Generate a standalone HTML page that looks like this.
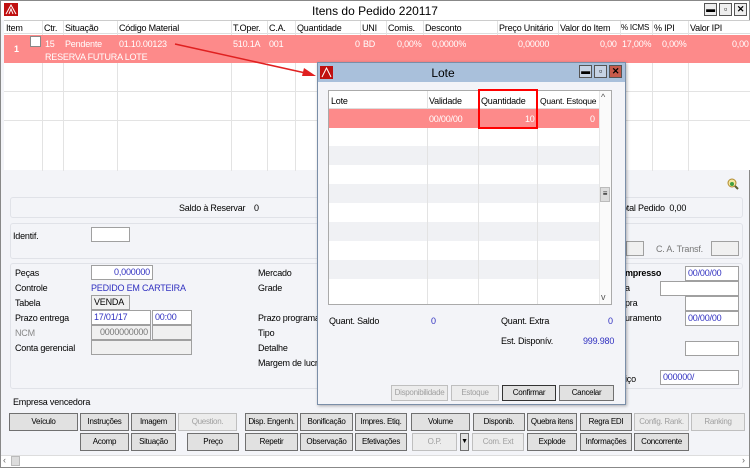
<!DOCTYPE html>
<html><head><meta charset="utf-8"><style>
*{box-sizing:border-box;margin:0;padding:0}
body{width:750px;height:468px;overflow:hidden;background:#f3f4f8;font-family:"Liberation Sans",sans-serif;font-size:9px;letter-spacing:-0.2px;color:#000;position:relative}
.a{position:absolute;white-space:nowrap}
.btn{position:absolute;height:18px;border:1px solid #707070;background:#e1e1e1;text-align:center;line-height:16px;font-size:8px;letter-spacing:-0.3px;white-space:nowrap;overflow:hidden}
.dis{color:#a0a0a0;border-color:#bfbfbf;background:#ececec}
.in{position:absolute;height:15px;background:#fff;border:1px solid #a0a0a0;line-height:13px;padding:0 2px;font-size:9px;white-space:nowrap}
.gr{background:#f0f0f0}
.blue{color:#3030c0}
.grp{position:absolute;border:1px solid #e0e2e8;border-radius:3px}
.vl{position:absolute;width:1px;background:#e3e3e3}
</style></head><body>
<div class="a" style="left:0;top:0;width:750px;height:468px;border:1px solid #888"></div>
<div class="a" style="top:1px;left:1px;width:748px;height:19px;background:#fff"></div>
<svg class="a" style="left:4px;top:3px" width="14" height="13"><rect width="14" height="13" fill="#c01010"/><path d="M2 11 L7 2 L12 11 M5 11 L7 6 L9 11" stroke="#fff" stroke-width="1" fill="none"/></svg>
<div class="a" style="left:0;width:750px;top:4px;text-align:center;font-size:12px;letter-spacing:0">Itens do Pedido 220117</div>
<div class="a" style="left:704px;top:3px;width:13px;height:13px;border:1px solid #555;background:#eee;font-size:9px;text-align:center;line-height:10px;font-weight:bold">▬</div>
<div class="a" style="left:719px;top:3px;width:13px;height:13px;border:1px solid #555;background:#eee;text-align:center;line-height:11px;font-weight:bold">▫</div>
<div class="a" style="left:734px;top:3px;width:13px;height:13px;border:1px solid #555;background:#eee;text-align:center;line-height:11px;font-weight:bold">✕</div>
<div class="a" style="left:4px;top:20px;width:746px;height:150px;background:#fff;border-top:1px solid #ccc"></div>
<div class="a" style="left:4px;top:21px;width:746px;height:13px;background:#fff;border-bottom:1px solid #ddd"></div>
<div class="vl" style="left:42px;top:21px;height:150px"></div><div class="vl" style="left:63px;top:21px;height:150px"></div><div class="vl" style="left:117px;top:21px;height:150px"></div><div class="vl" style="left:231px;top:21px;height:150px"></div><div class="vl" style="left:267px;top:21px;height:150px"></div><div class="vl" style="left:295px;top:21px;height:150px"></div><div class="vl" style="left:360px;top:21px;height:150px"></div><div class="vl" style="left:386px;top:21px;height:150px"></div><div class="vl" style="left:423px;top:21px;height:150px"></div><div class="vl" style="left:497px;top:21px;height:150px"></div><div class="vl" style="left:558px;top:21px;height:150px"></div><div class="vl" style="left:620px;top:21px;height:150px"></div><div class="vl" style="left:652px;top:21px;height:150px"></div><div class="vl" style="left:688px;top:21px;height:150px"></div>
<div class="a" style="left:4px;top:91px;width:746px;height:1px;background:#e3e3e3"></div>
<div class="a" style="left:4px;top:120px;width:746px;height:1px;background:#e3e3e3"></div>
<div class="a" style="left:6px;top:23px">Item</div><div class="a" style="left:44px;top:23px">Ctr.</div><div class="a" style="left:65px;top:23px">Situação</div><div class="a" style="left:119px;top:23px">Código Material</div><div class="a" style="left:233px;top:23px">T.Oper.</div><div class="a" style="left:269px;top:23px">C.A.</div><div class="a" style="left:297px;top:23px">Quantidade</div><div class="a" style="left:362px;top:23px">UNI</div><div class="a" style="left:388px;top:23px">Comis.</div><div class="a" style="left:425px;top:23px">Desconto</div><div class="a" style="left:499px;top:23px">Preço Unitário</div><div class="a" style="left:560px;top:23px">Valor do Item</div><div class="a" style="left:621px;top:23px;font-size:8px">% ICMS</div><div class="a" style="left:654px;top:23px">% IPI</div><div class="a" style="left:690px;top:23px">Valor IPI</div>
<div class="a" style="left:4px;top:35px;width:746px;height:28px;background:#fd8a8a"></div>
<div class="a" style="left:30px;top:36px;width:11px;height:11px;background:#fff;border:1px solid #888"></div>
<div class="a" style="color:#fff;left:14px;top:44px;font-weight:bold">1</div>
<div class="a" style="color:#fff;left:45px;top:39px">15</div><div class="a" style="color:#fff;left:65px;top:39px">Pendente</div><div class="a" style="color:#fff;left:119px;top:39px">01.10.00123</div><div class="a" style="color:#fff;left:233px;top:39px">510.1A</div><div class="a" style="color:#fff;left:269px;top:39px">001</div><div class="a" style="color:#fff;left:355px;top:39px">0</div><div class="a" style="color:#fff;left:363px;top:39px">BD</div><div class="a" style="color:#fff;left:397px;top:39px">0,00%</div><div class="a" style="color:#fff;left:432px;top:39px">0,0000%</div><div class="a" style="color:#fff;left:518px;top:39px">0,00000</div><div class="a" style="color:#fff;left:600px;top:39px">0,00</div><div class="a" style="color:#fff;left:622px;top:39px">17,00%</div><div class="a" style="color:#fff;left:662px;top:39px">0,00%</div><div class="a" style="color:#fff;left:732px;top:39px">0,00</div>
<div class="a" style="color:#fff;left:45px;top:52px">RESERVA FUTURA LOTE</div>
<svg class="a" style="left:170px;top:40px" width="150" height="40"><path d="M5 4 L140 34" stroke="#e02020" stroke-width="1.5"/><path d="M146 36 L134 28 L132 36 Z" fill="#e02020"/></svg>
<svg class="a" style="left:727px;top:178px" width="12" height="12"><circle cx="5" cy="5" r="4" fill="#f4e7a0" stroke="#b08a30"/><path d="M8 8 L11 11" stroke="#606030" stroke-width="2"/><circle cx="5" cy="6" r="2" fill="#40a040"/></svg>
<div class="grp" style="left:10px;top:197px;width:733px;height:21px"></div>
<div class="a" style="left:179px;top:203px">Saldo à Reservar</div><div class="a" style="left:254px;top:203px">0</div>
<div class="a" style="left:622px;top:203px">otal Pedido&nbsp; 0,00</div>
<div class="grp" style="left:10px;top:223px;width:733px;height:36px"></div>
<div class="a" style="left:13px;top:231px">Identif.</div>
<div class="in" style="left:91px;top:227px;width:39px"></div>
<div class="in gr" style="left:626px;top:241px;width:18px"></div>
<div class="a" style="left:656px;top:244px;color:#777">C. A. Transf.</div>
<div class="in gr" style="left:711px;top:241px;width:28px"></div>
<div class="grp" style="left:10px;top:263px;width:733px;height:126px"></div>
<div class="a" style="left:15px;top:268px">Peças</div><div class="in blue" style="left:91px;top:265px;width:62px;text-align:right">0,000000</div>
<div class="a" style="left:15px;top:283px">Controle</div><div class="a blue" style="left:91px;top:283px">PEDIDO EM CARTEIRA</div>
<div class="a" style="left:15px;top:298px">Tabela</div><div class="in gr" style="left:91px;top:295px;width:39px">VENDA</div>
<div class="a" style="left:15px;top:313px">Prazo entrega</div><div class="in blue" style="left:91px;top:310px;width:60px">17/01/17</div><div class="in blue" style="left:152px;top:310px;width:40px">00:00</div>
<div class="a" style="left:15px;top:328px;color:#888">NCM</div><div class="in gr" style="left:91px;top:325px;width:60px;text-align:right;color:#777">0000000000</div><div class="in gr" style="left:152px;top:325px;width:40px"></div>
<div class="a" style="left:15px;top:343px">Conta gerencial</div><div class="in gr" style="left:91px;top:340px;width:101px"></div>
<div class="a" style="left:258px;top:268px">Mercado</div><div class="a" style="left:258px;top:283px">Grade</div><div class="a" style="left:258px;top:313px">Prazo programa</div><div class="a" style="left:258px;top:328px">Tipo</div><div class="a" style="left:258px;top:343px">Detalhe</div><div class="a" style="left:258px;top:358px">Margem de lucro</div>
<div class="a" style="left:625px;top:268px;font-weight:bold">mpresso</div><div class="in blue" style="left:685px;top:266px;width:54px">00/00/00</div>
<div class="a" style="left:625px;top:283px">a</div><div class="in" style="left:660px;top:281px;width:79px"></div>
<div class="a" style="left:625px;top:298px">pra</div><div class="in" style="left:685px;top:296px;width:54px"></div>
<div class="a" style="left:625px;top:313px">uramento</div><div class="in blue" style="left:685px;top:311px;width:54px">00/00/00</div>
<div class="in" style="left:685px;top:341px;width:54px"></div>
<div class="a" style="left:625px;top:374px">iço</div><div class="in blue" style="left:660px;top:370px;width:79px">000000/</div>
<div class="a" style="left:13px;top:397px">Empresa vencedora</div>
<div class="btn" style="left:9px;top:413px;width:69px">Veículo</div><div class="btn" style="left:80px;top:413px;width:49px">Instruções</div><div class="btn" style="left:131px;top:413px;width:45px">Imagem</div><div class="btn dis" style="left:178px;top:413px;width:59px">Question.</div><div class="btn" style="left:245px;top:413px;width:53px">Disp. Engenh.</div><div class="btn" style="left:300px;top:413px;width:53px">Bonificação</div><div class="btn" style="left:355px;top:413px;width:52px">Impres. Etiq.</div><div class="btn" style="left:411px;top:413px;width:59px">Volume</div><div class="btn" style="left:473px;top:413px;width:52px">Disponib.</div><div class="btn" style="left:527px;top:413px;width:50px">Quebra itens</div><div class="btn" style="left:580px;top:413px;width:52px">Regra EDI</div><div class="btn dis" style="left:634px;top:413px;width:55px">Config. Rank.</div><div class="btn dis" style="left:691px;top:413px;width:54px">Ranking</div>
<div class="btn" style="left:80px;top:433px;width:49px">Acomp</div><div class="btn" style="left:131px;top:433px;width:45px">Situação</div><div class="btn" style="left:187px;top:433px;width:52px">Preço</div><div class="btn" style="left:245px;top:433px;width:53px">Repetir</div><div class="btn" style="left:300px;top:433px;width:53px">Observação</div><div class="btn" style="left:355px;top:433px;width:52px">Efetivações</div><div class="btn dis" style="left:412px;top:433px;width:45px">O.P.</div><div class="btn" style="left:460px;top:433px;width:9px;font-size:7px">▼</div><div class="btn dis" style="left:472px;top:433px;width:52px">Com. Ext</div><div class="btn" style="left:527px;top:433px;width:50px">Explode</div><div class="btn" style="left:580px;top:433px;width:52px">Informações</div><div class="btn" style="left:634px;top:433px;width:55px">Concorrente</div>
<div class="a" style="left:1px;top:455px;width:748px;height:12px;background:#fff;border-top:1px solid #ddd"></div>
<div class="a" style="left:3px;top:455px;color:#666">‹</div><div class="a" style="left:11px;top:456px;width:9px;height:10px;background:#ddd;border:1px solid #bbb"></div><div class="a" style="left:742px;top:455px;color:#666">›</div>
<!-- Lote dialog -->
<div class="a" style="left:317px;top:62px;width:309px;height:343px;background:#f3f4f8;border:1px solid #7a8ea8;box-shadow:1px 1px 3px rgba(0,0,0,.3)"></div>
<div class="a" style="left:318px;top:63px;width:307px;height:19px;background:#a9c0db"></div>
<svg class="a" style="left:320px;top:66px" width="13" height="13"><rect width="13" height="13" fill="#c01010"/><path d="M2 11 L6.5 2 L11 11" stroke="#fff" fill="none"/></svg>
<div class="a" style="left:318px;width:250px;top:66px;text-align:center;font-size:12px;letter-spacing:0">Lote</div>
<div class="a" style="left:579px;top:65px;width:13px;height:13px;border:1px solid #555;background:#c6d3e4;text-align:center;line-height:10px;font-weight:bold">▬</div>
<div class="a" style="left:594px;top:65px;width:13px;height:13px;border:1px solid #555;background:#c6d3e4;text-align:center;line-height:11px;font-weight:bold">▫</div>
<div class="a" style="left:609px;top:65px;width:13px;height:13px;border:1px solid #555;background:#c75a4a;text-align:center;line-height:11px;font-weight:bold">✕</div>
<div class="a" style="left:328px;top:90px;width:284px;height:215px;background:#fff;border:1px solid #aaa"></div>
<div class="a" style="left:329px;top:146px;width:270px;height:19px;background:#f0f1f4"></div>
<div class="a" style="left:329px;top:184px;width:270px;height:19px;background:#f0f1f4"></div>
<div class="a" style="left:329px;top:222px;width:270px;height:19px;background:#f0f1f4"></div>
<div class="a" style="left:329px;top:260px;width:270px;height:19px;background:#f0f1f4"></div>
<div class="vl" style="left:427px;top:91px;height:213px"></div><div class="vl" style="left:478px;top:91px;height:213px"></div><div class="vl" style="left:537px;top:91px;height:213px"></div>
<div class="a" style="left:329px;top:108px;width:270px;height:1px;background:#ddd"></div>
<div class="a" style="left:331px;top:96px">Lote</div><div class="a" style="left:429px;top:96px">Validade</div><div class="a" style="left:481px;top:96px">Quantidade</div><div class="a" style="left:540px;top:96px;font-size:8.5px">Quant. Estoque</div>
<div class="a" style="left:329px;top:109px;width:270px;height:19px;background:#fd8a8a"></div>
<div class="a" style="left:429px;top:114px;color:#fff">00/00/00</div><div class="a" style="left:525px;top:114px;color:#fff">10</div><div class="a" style="left:590px;top:114px;color:#fff">0</div>
<div class="a" style="left:478px;top:89px;width:60px;height:40px;border:2px solid #f00"></div>
<div class="a" style="left:599px;top:91px;width:12px;height:213px;background:#fafafa;border-left:1px solid #e6e6e6"></div>
<div class="a" style="left:601px;top:92px;color:#555">^</div><div class="a" style="left:601px;top:292px;color:#555">v</div>
<div class="a" style="left:600px;top:187px;width:10px;height:15px;background:#ddd;border:1px solid #bbb;text-align:center;line-height:12px;font-size:8px">≡</div>
<div class="a" style="left:329px;top:316px">Quant. Saldo</div><div class="a blue" style="left:431px;top:316px">0</div>
<div class="a" style="left:501px;top:316px">Quant. Extra</div><div class="a blue" style="left:608px;top:316px">0</div>
<div class="a" style="left:501px;top:336px">Est. Disponív.</div><div class="a blue" style="left:583px;top:336px">999.980</div>
<div class="btn dis" style="left:391px;top:385px;width:57px;height:16px;line-height:14px">Disponibilidade</div>
<div class="btn dis" style="left:451px;top:385px;width:48px;height:16px;line-height:14px">Estoque</div>
<div class="btn" style="left:502px;top:385px;width:54px;height:16px;line-height:14px;border-color:#333">Confirmar</div>
<div class="btn" style="left:559px;top:385px;width:55px;height:16px;line-height:14px">Cancelar</div>
</body></html>
